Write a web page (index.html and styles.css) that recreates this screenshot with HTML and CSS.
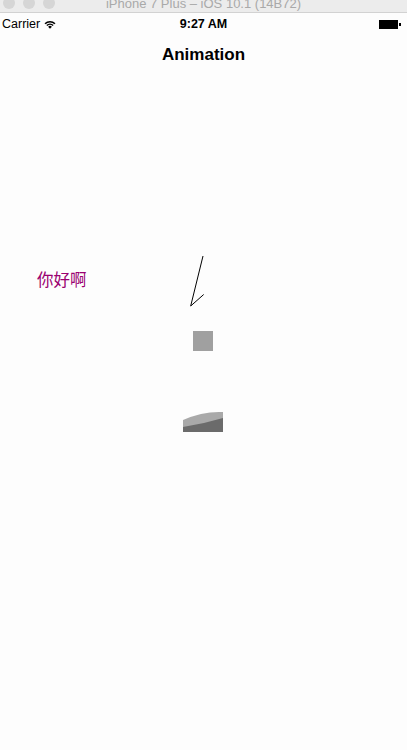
FILE: index.html
```html
<!DOCTYPE html>
<html lang="en">
<head>
<meta charset="UTF-8">
<title>Animation</title>
<link rel="stylesheet" href="styles.css">
</head>
<body>
<div class="window-bar">
  <span class="light"></span><span class="light"></span><span class="light"></span>
  <span class="window-title">iPhone 7 Plus – iOS 10.1 (14B72)</span>
</div>
<div class="status-bar">
  <span class="carrier">Carrier
    <svg class="wifi" width="12" height="9" viewBox="0 0 12 9">
      <path d="M0.5 3.2 A8 8 0 0 1 11.5 3.2 L10.4 4.3 A6.4 6.4 0 0 0 1.6 4.3 Z" fill="#000"/>
      <path d="M2.3 5 A5.2 5.2 0 0 1 9.7 5 L8.6 6.1 A3.6 3.6 0 0 0 3.4 6.1 Z" fill="#000"/>
      <path d="M4.1 6.8 A2.6 2.6 0 0 1 7.9 6.8 L6 8.8 Z" fill="#000"/>
    </svg>
  </span>
  <span class="clock">9:27 AM</span>
  <span class="battery"><span class="battery-body"></span><span class="battery-tip"></span></span>
</div>
<div class="nav-bar">Animation</div>
<main class="canvas">
  <span class="greeting">你好啊</span>
  <svg class="drawing" width="407" height="680" viewBox="0 0 407 680">
    <!-- canvas origin is y=70 on the page -->
    <polyline points="203,186 190.7,236 203.7,224.5" fill="none" stroke="#000" stroke-width="1"/>
    <rect x="193" y="261" width="20" height="20" fill="#a0a0a0"/>
    <path d="M183 350 Q203 341 223 342 L223 362 L183 362 Z" fill="#a9a9a9"/>
    <path d="M183 357 Q203 354 223 348 L223 362 L183 362 Z" fill="#6b6b6b"/>
  </svg>
</main>
</body>
</html>
```
FILE: styles.css
```css
body {
  margin: 0;
  background: #fdfdfd;
  font-family: "Liberation Sans", Arial, sans-serif;
  width: 407px;
  height: 750px;
  overflow: hidden;
}

.window-bar {
  height: 12px;
  background: #ececec;
  border-bottom: 1px solid #d2d2d2;
  display: flex;
  align-items: flex-end;
  position: relative;
  overflow: hidden;
}

.light {
  width: 12px;
  height: 12px;
  border-radius: 50%;
  background: #d6d6d6;
  margin-left: 3px;
  margin-right: 5px;
  margin-bottom: 3px;
  flex: none;
}

.window-title {
  position: absolute;
  left: 0;
  right: 0;
  bottom: 1px;
  text-align: center;
  font-size: 13px;
  color: #a9a9a9;
  line-height: 15px;
}

.status-bar {
  height: 18px;
  padding: 2px 6px 0 2px;
  display: flex;
  align-items: center;
  justify-content: space-between;
  position: relative;
  font-size: 12.5px;
  color: #000;
}

.carrier {
  display: flex;
  align-items: center;
  gap: 4px;
}

.clock {
  position: absolute;
  left: 0;
  right: 0;
  text-align: center;
  font-weight: bold;
  font-size: 12.5px;
}

.battery {
  display: flex;
  align-items: center;
}

.battery-body {
  width: 19px;
  height: 9px;
  background: #000;
}

.battery-tip {
  width: 2px;
  height: 3px;
  background: #000;
  margin-left: 1px;
}

.nav-bar {
  box-sizing: border-box;
  height: 37px;
  padding-top: 7px;
  display: flex;
  align-items: center;
  justify-content: center;
  font-size: 17px;
  font-weight: bold;
  color: #000;
}

.canvas {
  position: relative;
  height: 680px;
}

.drawing {
  display: block;
}

.greeting {
  position: absolute;
  left: 37px;
  top: 201px;
  font-size: 16.5px;
  color: #9a0070;
  font-family: "Noto Sans CJK SC", sans-serif;
  line-height: 17px;
}
```
